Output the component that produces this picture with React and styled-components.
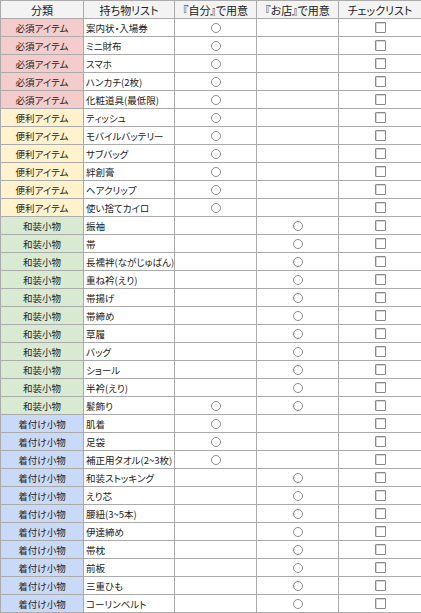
import styled, { createGlobalStyle } from 'styled-components';

const GlobalStyle = createGlobalStyle`
  html, body {
    margin: 0;
    padding: 0;
    background: #fff;
  }
  body {
    font-family: "Noto Sans CJK JP", "Noto Sans", sans-serif;
    font-feature-settings: "palt";
    color: #222;
  }
`;

const categoryColors = {
  必須アイテム: '#f4cccc',
  便利アイテム: '#fff2cc',
  和装小物: '#d9ead3',
  着付け小物: '#c9daf8',
};

const rows = [
  ['必須アイテム', '案内状・入場券', true, false],
  ['必須アイテム', 'ミニ財布', true, false],
  ['必須アイテム', 'スマホ', true, false],
  ['必須アイテム', 'ハンカチ(2枚)', true, false],
  ['必須アイテム', '化粧道具(最低限)', true, false],
  ['便利アイテム', 'ティッシュ', true, false],
  ['便利アイテム', 'モバイルバッテリー', true, false],
  ['便利アイテム', 'サブバッグ', true, false],
  ['便利アイテム', '絆創膏', true, false],
  ['便利アイテム', 'ヘアクリップ', true, false],
  ['便利アイテム', '使い捨てカイロ', true, false],
  ['和装小物', '振袖', false, true],
  ['和装小物', '帯', false, true],
  ['和装小物', '長襦袢(ながじゅばん)', false, true],
  ['和装小物', '重ね衿(えり)', false, true],
  ['和装小物', '帯揚げ', false, true],
  ['和装小物', '帯締め', false, true],
  ['和装小物', '草履', false, true],
  ['和装小物', 'バッグ', false, true],
  ['和装小物', 'ショール', false, true],
  ['和装小物', '半衿(えり)', false, true],
  ['和装小物', '髪飾り', true, true],
  ['着付け小物', '肌着', true, false],
  ['着付け小物', '足袋', true, false],
  ['着付け小物', '補正用タオル(2~3枚)', true, false],
  ['着付け小物', '和装ストッキング', false, true],
  ['着付け小物', 'えり芯', false, true],
  ['着付け小物', '腰紐(3~5本)', false, true],
  ['着付け小物', '伊達締め', false, true],
  ['着付け小物', '帯枕', false, true],
  ['着付け小物', '前板', false, true],
  ['着付け小物', '三重ひも', false, true],
  ['着付け小物', 'コーリンベルト', false, true],
];

const Table = styled.table`
  width: 421px;
  table-layout: fixed;
  border-collapse: collapse;
`;

const Col = styled.col`
  width: ${({ w }) => w}px;
`;

const HeadCell = styled.th`
  box-sizing: border-box;
  height: 18px;
  padding: 0;
  border: 1px solid #ababab;
  background: #f3f3f3;
  font-size: 11px;
  font-weight: 400;
  line-height: 16px;
  text-align: center;
  white-space: nowrap;
  overflow: hidden;
  color: #222;
`;

const Cell = styled.td`
  box-sizing: border-box;
  height: 18px;
  padding: 0 ${({ left }) => (left ? '2px' : '0')};
  border: 1px solid #ababab;
  background: ${({ bg }) => bg || '#fff'};
  font-size: 9.5px;
  line-height: 16px;
  text-align: ${({ left }) => (left ? 'left' : 'center')};
  white-space: nowrap;
  overflow: hidden;
  color: #222;
`;

const Circle = styled.span`
  display: inline-block;
  width: 8px;
  height: 8px;
  border: 1px solid #8c8c8c;
  border-radius: 50%;
  vertical-align: middle;
  margin-top: -2px;
`;

const CheckBox = styled.span`
  display: inline-block;
  width: 9px;
  height: 9px;
  border: 1px solid #8a8a8a;
  border-radius: 1px;
  background: #fff;
  box-shadow: inset 1px 1px 0 #d6d6d6;
  vertical-align: middle;
  margin-top: -2px;
`;

export default function App() {
  return (
    <>
      <GlobalStyle />
      <Table>
        <colgroup>
          <Col w={83} />
          <Col w={91} />
          <Col w={82} />
          <Col w={82} />
          <Col w={83} />
        </colgroup>
        <thead>
          <tr>
            <HeadCell>分類</HeadCell>
            <HeadCell>持ち物リスト</HeadCell>
            <HeadCell>『自分』で用意</HeadCell>
            <HeadCell>『お店』で用意</HeadCell>
            <HeadCell>チェックリスト</HeadCell>
          </tr>
        </thead>
        <tbody>
          {rows.map(([cat, item, self, shop]) => (
            <tr key={item}>
              <Cell bg={categoryColors[cat]}>{cat}</Cell>
              <Cell left>{item}</Cell>
              <Cell>{self && <Circle />}</Cell>
              <Cell>{shop && <Circle />}</Cell>
              <Cell>
                <CheckBox />
              </Cell>
            </tr>
          ))}
        </tbody>
      </Table>
    </>
  );
}
